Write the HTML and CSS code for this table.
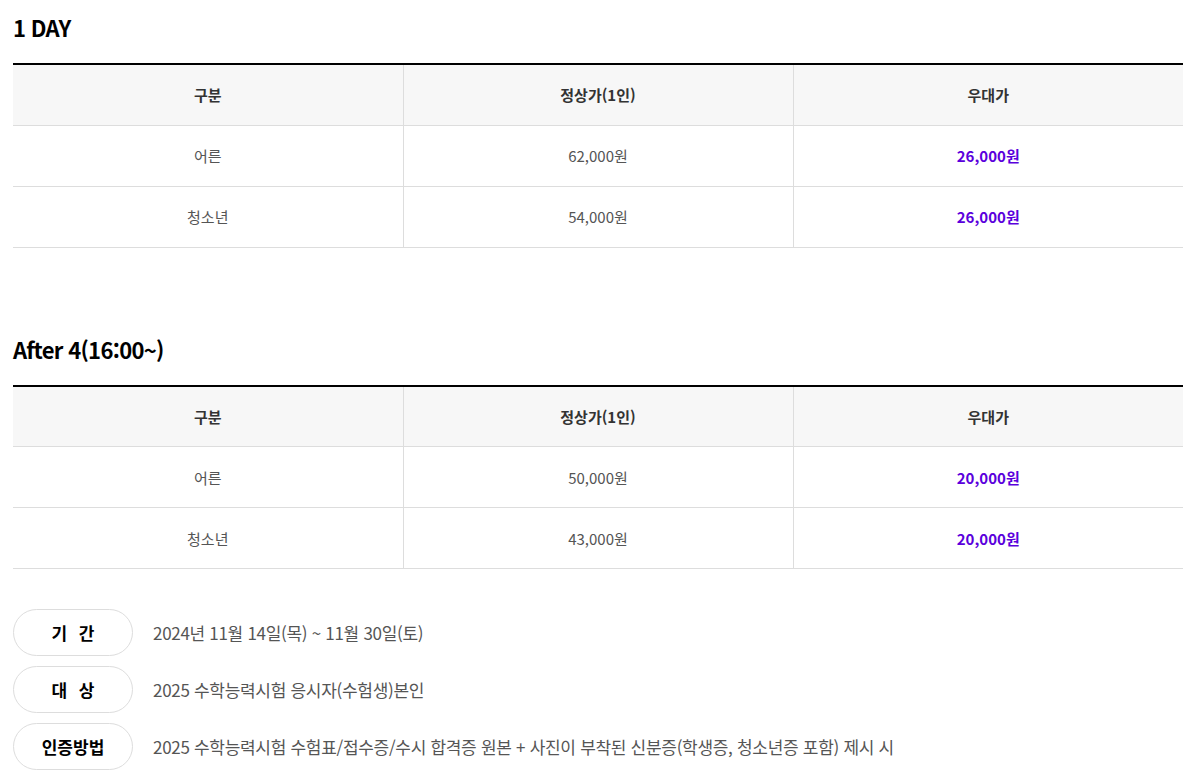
FILE: index.html
```html
<!DOCTYPE html>
<html lang="ko">
<head>
<meta charset="utf-8">
<link rel="stylesheet" href="styles.css">
</head>
<body>
<div class="wrap">
  <section class="sec">
    <h2 class="title">1 DAY</h2>
    <table class="price">
      <thead>
        <tr><th>구분</th><th>정상가(1인)</th><th>우대가</th></tr>
      </thead>
      <tbody>
        <tr><td>어른</td><td>62,000원</td><td class="sale">26,000원</td></tr>
        <tr><td>청소년</td><td>54,000원</td><td class="sale">26,000원</td></tr>
      </tbody>
    </table>
  </section>
  <section class="sec sec2">
    <h2 class="title">After 4(16:00~)</h2>
    <table class="price">
      <thead>
        <tr><th>구분</th><th>정상가(1인)</th><th>우대가</th></tr>
      </thead>
      <tbody>
        <tr><td>어른</td><td>50,000원</td><td class="sale">20,000원</td></tr>
        <tr><td>청소년</td><td>43,000원</td><td class="sale">20,000원</td></tr>
      </tbody>
    </table>
  </section>
  <ul class="info">
    <li class="info-row"><span class="pill spaced">기 간</span><span class="desc">2024년 11월 14일(목) ~ 11월 30일(토)</span></li>
    <li class="info-row"><span class="pill spaced">대 상</span><span class="desc">2025 수학능력시험 응시자(수험생)본인</span></li>
    <li class="info-row"><span class="pill">인증방법</span><span class="desc">2025 수학능력시험 수험표/접수증/수시 합격증 원본 + 사진이 부착된 신분증(학생증, 청소년증 포함) 제시 시</span></li>
  </ul>
</div>
</body>
</html>
```
FILE: styles.css
```css
* { box-sizing: border-box; }
html, body { margin: 0; padding: 0; background: #fff; }
body {
  font-family: "Noto Sans CJK KR", "Noto Sans", sans-serif;
  color: #555;
}
.wrap {
  width: 1170px;
  margin-left: 13px;
  padding-top: 12px;
}
.title {
  margin: 0 0 21px;
  font-size: 22px;
  line-height: 30px;
  font-weight: 700;
  color: #000;
  letter-spacing: -0.7px;
}
.sec2 { margin-top: 86px; }
.price {
  width: 100%;
  border-collapse: collapse;
  table-layout: fixed;
  border-top: 2px solid #000;
}
.price th, .price td {
  height: 61px;
  text-align: center;
  font-size: 15px;
  border-bottom: 1px solid #ddd;
  border-left: 1px solid #ddd;
  padding: 0;
  letter-spacing: 0;
}
.price th:first-child, .price td:first-child { border-left: 0; }
.price th {
  background: #f7f7f7;
  color: #333;
  font-weight: 700;
}
.price td { color: #555; font-weight: 400; }
.price td.sale { color: #5a00dc; font-weight: 700; }
.info {
  list-style: none;
  margin: 40px 0 0;
  padding: 0;
  display: flex;
  flex-direction: column;
  gap: 10px;
}
.info-row {
  display: flex;
  align-items: center;
  gap: 20px;
}
.pill {
  flex: none;
  width: 120px;
  height: 47px;
  border: 1px solid #ddd;
  border-radius: 24px;
  display: flex;
  align-items: center;
  justify-content: center;
  font-size: 17px;
  font-weight: 700;
  color: #000;
}
.pill.spaced { word-spacing: 7px; }
.desc {
  font-size: 17px;
  color: #555;
  letter-spacing: -0.3px;
}
```
